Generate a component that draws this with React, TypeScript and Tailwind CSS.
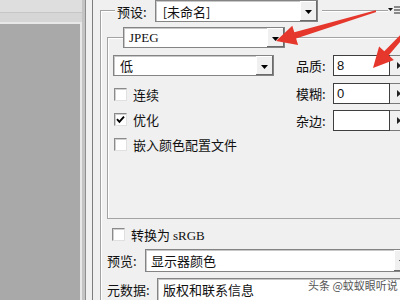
import React from 'react';

const CJK = "font-['Noto_Sans_CJK_SC','Noto_Sans',sans-serif]";

function DropBtn() {
  return (
    <div className="flex h-full w-[17px] shrink-0 items-center justify-center bg-[#f0f0f0] pt-[2px] shadow-[inset_-1px_-1px_0_#6b6b6b,inset_1px_1px_0_#ffffff]">
      <svg width="7" height="4" viewBox="0 0 7 4">
        <path d="M0 0h7L3.5 4z" fill="#000" />
      </svg>
    </div>
  );
}

function Combo({ className, children }: { className: string; children?: React.ReactNode }) {
  return (
    <div className={`flex shrink-0 border border-[#848484] bg-white shadow-[inset_1px_1px_0_#c8c8c8] ${className}`}>
      <div className="flex min-w-0 flex-1 items-center pl-[5px] leading-none">{children}</div>
      <DropBtn />
    </div>
  );
}

function Field({ value }: { value: string }) {
  return (
    <div className="flex h-[21px]">
      <div className="flex w-[57px] items-center border border-[#3f3f3f] bg-white pl-[3px] font-['Liberation_Sans',sans-serif] text-[13px] leading-none">
        {value}
      </div>
      <div className="flex w-[12px] items-center justify-end border-y border-[#7a7a7a] bg-[#f0f0f0] pr-[1px]">
        <svg width="4" height="7" viewBox="0 0 4 7">
          <path d="M0 0L4 3.5 0 7z" fill="#222" />
        </svg>
      </div>
    </div>
  );
}

function Check({ checked, children }: { checked?: boolean; children: React.ReactNode }) {
  return (
    <div className="flex h-[25px] items-center gap-[6px]">
      <div className="flex h-[13px] w-[13px] shrink-0 items-center justify-center border border-t-[#8a8a8a] border-l-[#8a8a8a] border-b-[#e0e0e0] border-r-[#e0e0e0] bg-white shadow-[inset_1px_1px_0_#d0d0d0]">
        {checked && (
          <svg width="9" height="9" viewBox="0 0 9 9">
            <path d="M1 4.2l2.4 2.6L8 1.6" stroke="#000" strokeWidth="1.9" fill="none" />
          </svg>
        )}
      </div>
      <span className="leading-none">{children}</span>
    </div>
  );
}

function Arrows() {
  return (
    <svg className="pointer-events-none absolute inset-0" width="400" height="300" viewBox="0 0 400 300">
      <polygon
        points="376.2,11.9 296.1,38.4 298.1,44.9 276,41 292.3,25.7 294.3,32.2 375.8,10.2"
        fill="#e5372c"
      />
      <polygon
        points="405.6,35.4 388.7,55.2 393.9,59.9 373,68 379.1,46.5 384.3,51.2 402.6,32.6"
        fill="#e5372c"
      />
    </svg>
  );
}

export default function App() {
  return (
    <div className={`relative flex h-[300px] w-[400px] overflow-hidden bg-[#f0f0f0] text-[13px] text-[#111] ${CJK}`}>
      {/* left canvas area */}
      <div className="flex w-[82px] shrink-0 flex-col">
        <div className="h-[13px] border-b border-[#c6c6c6] bg-[#dedede]" />
        <div className="h-[9px] bg-[#d6d6d6]" />
        <div className="flex-1 border-t-2 border-r-2 border-[#e8e8e8] bg-[#a9a9a9]" />
      </div>
      <div className="w-[3px] shrink-0 bg-[#c4c4c4]" />
      <div className="w-[1px] shrink-0 bg-[#8e8e8e]" />
      <div className="w-[6px] shrink-0" />
      <div className="w-[1px] shrink-0 bg-[#7c7c7c]" />
      <div className="w-[7px] shrink-0" />

      {/* settings panel */}
      <div className="flex min-w-0 flex-1 flex-col">
        <div className="mt-[10px] flex flex-1 flex-col border-t border-l border-[#a3a3a3] shadow-[inset_1px_1px_0_#ffffff]">
          <div className="-mt-[11px] flex h-[22px] items-start">
            <div className="w-[14px] shrink-0" />
            <div className="flex h-[22px] items-center bg-[#f0f0f0] pl-[2px] pr-[8px] leading-none">预设:</div>
            <Combo className="h-[22px] w-[163px]">
              <span className="pl-[2px]">[未命名]</span>
            </Combo>
            <div className="h-[22px] w-[4px] bg-[#f0f0f0]" />
            <div className="flex-1" />
            <div className="mt-[5px] flex h-[9px] w-[12px] items-center gap-[1px] bg-[#f0f0f0]">
              <svg width="12" height="8" viewBox="0 0 12 8">
                <path d="M0 2h5L2.5 5z" fill="#111" />
                <path d="M6 1h6M6 4h6M6 7h6" stroke="#222" strokeWidth="1" />
              </svg>
            </div>
          </div>

          {/* format group */}
          <div className="mt-[15px] ml-[6px] flex h-[182px] w-[330px] shrink-0 flex-col border border-[#a3a3a3] shadow-[inset_1px_1px_0_#ffffff]">
            <div className="-mt-[11px] flex h-[21px] items-start">
              <div className="w-[15px] shrink-0" />
              <Combo className="h-[21px] w-[162px]">
                <span className="font-['Liberation_Serif',serif] text-[13px]">JPEG</span>
              </Combo>
              <div className="h-[21px] w-[2px] bg-[#f0f0f0]" />
            </div>

            <div className="mt-[7px] flex">
              <div className="ml-[5px] flex w-[161px] flex-col">
                <Combo className="h-[21px] w-[161px]">
                  <span className="pl-[1px]">低</span>
                </Combo>
                <div className="mt-[6px] ml-[1px] flex flex-col">
                  <Check>连续</Check>
                  <Check checked>优化</Check>
                  <Check>嵌入颜色配置文件</Check>
                </div>
              </div>

              <div className="ml-[22px] flex flex-col">
                <div className="flex h-[21px] items-center">
                  <span className="w-[37px] leading-none">品质:</span>
                  <Field value="8" />
                </div>
                <div className="mt-[7px] flex h-[21px] items-center">
                  <span className="w-[37px] leading-none">模糊:</span>
                  <Field value="0" />
                </div>
                <div className="mt-[6px] flex h-[21px] items-center">
                  <span className="w-[37px] leading-none">杂边:</span>
                  <Field value="" />
                </div>
              </div>
            </div>
          </div>

          <div className="mt-[3px] ml-[11px]">
            <Check>
              转换为 <span className="font-['Liberation_Serif',serif] text-[13px]">sRGB</span>
            </Check>
          </div>

          <div className="mt-[2px] ml-[6px] flex h-[23px] items-center">
            <span className="w-[38px] shrink-0 leading-none">预览:</span>
            <Combo className="h-[23px] w-[267px]">
              <span>显示器颜色</span>
            </Combo>
          </div>

          <div className="mt-[6px] ml-[6px] flex h-[23px] items-center">
            <span className="w-[50px] shrink-0 leading-none">元数据:</span>
            <Combo className="h-[23px] w-[267px]">
              <span>版权和联系信息</span>
            </Combo>
          </div>
        </div>
      </div>

      <div className="absolute top-[280px] left-[308px] text-[11px] leading-none text-[#555]">头条 @蚊蚁眼听说</div>
      <Arrows />
    </div>
  );
}
